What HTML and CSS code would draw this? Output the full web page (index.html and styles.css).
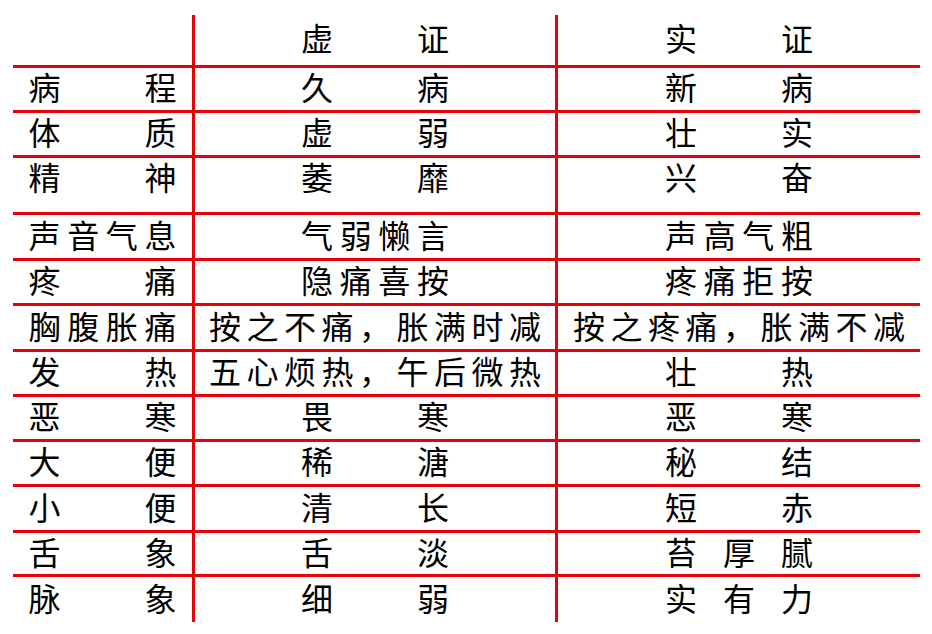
FILE: index.html
```html
<!DOCTYPE html>
<html lang="zh-CN">
<head>
<meta charset="utf-8">
<title>虚证与实证</title>
<link rel="stylesheet" href="styles.css">
</head>
<body>
<div class="table">
  <div class="row head">
    <div class="c c1"></div>
    <div class="c c2"><span class="j">虚证</span></div>
    <div class="c c3"><span class="j">实证</span></div>
  </div>
  <div class="row h45">
    <div class="c c1"><span class="j">病程</span></div>
    <div class="c c2"><span class="j">久病</span></div>
    <div class="c c3"><span class="j">新病</span></div>
  </div>
  <div class="row h45">
    <div class="c c1"><span class="j">体质</span></div>
    <div class="c c2"><span class="j">虚弱</span></div>
    <div class="c c3"><span class="j">壮实</span></div>
  </div>
  <div class="row tall">
    <div class="c c1"><span class="j">精神</span></div>
    <div class="c c2"><span class="j">萎靡</span></div>
    <div class="c c3"><span class="j">兴奋</span></div>
  </div>
  <div class="row h46">
    <div class="c c1"><span class="j">声音气息</span></div>
    <div class="c c2"><span class="j">气弱懒言</span></div>
    <div class="c c3"><span class="j">声高气粗</span></div>
  </div>
  <div class="row h45">
    <div class="c c1"><span class="j">疼痛</span></div>
    <div class="c c2"><span class="j">隐痛喜按</span></div>
    <div class="c c3"><span class="j">疼痛拒按</span></div>
  </div>
  <div class="row h46">
    <div class="c c1"><span class="j">胸腹胀痛</span></div>
    <div class="c c2"><span class="s">按之不痛，胀满时减</span></div>
    <div class="c c3"><span class="s">按之疼痛，胀满不减</span></div>
  </div>
  <div class="row h45">
    <div class="c c1"><span class="j">发热</span></div>
    <div class="c c2"><span class="s">五心烦热，午后微热</span></div>
    <div class="c c3"><span class="j">壮热</span></div>
  </div>
  <div class="row h45">
    <div class="c c1"><span class="j">恶寒</span></div>
    <div class="c c2"><span class="j">畏寒</span></div>
    <div class="c c3"><span class="j">恶寒</span></div>
  </div>
  <div class="row h45">
    <div class="c c1"><span class="j">大便</span></div>
    <div class="c c2"><span class="j">稀溏</span></div>
    <div class="c c3"><span class="j">秘结</span></div>
  </div>
  <div class="row h46">
    <div class="c c1"><span class="j">小便</span></div>
    <div class="c c2"><span class="j">清长</span></div>
    <div class="c c3"><span class="j">短赤</span></div>
  </div>
  <div class="row h44">
    <div class="c c1"><span class="j">舌象</span></div>
    <div class="c c2"><span class="j">舌淡</span></div>
    <div class="c c3"><span class="j">苔厚腻</span></div>
  </div>
  <div class="row last">
    <div class="c c1"><span class="j">脉象</span></div>
    <div class="c c2"><span class="j">细弱</span></div>
    <div class="c c3"><span class="j">实有力</span></div>
  </div>
</div>
</body>
</html>
```

FILE: styles.css
```css
html, body {
  margin: 0;
  padding: 0;
  background: #ffffff;
}

body {
  font-family: "Noto Sans CJK SC", "Noto Sans CJK TC", sans-serif;
  color: #000000;
}

.table {
  padding: 15px 0 0 13px;
  width: 907px;
  display: flex;
  flex-direction: column;
}

.row {
  display: flex;
  box-sizing: border-box;
  border-top: 3px solid #e8000b;
  width: 907px;
}

.row.head {
  border-top: none;
  height: 50px;
}

.h44 { height: 44px; }
.h45 { height: 45px; }
.h46 { height: 46px; }
.tall { height: 57px; }
.last { height: 48px; }

.c {
  box-sizing: border-box;
  display: flex;
  align-items: center;
  justify-content: center;
  font-size: 32px;
  line-height: 40px;
  padding-bottom: 6px;
}

.tall .c {
  padding-bottom: 18px;
}

.c1 { width: 179px; }

.c2 {
  width: 363px;
  border-left: 3px solid #e8000b;
}

.c3 {
  width: 365px;
  border-left: 3px solid #e8000b;
}

.j {
  display: inline-block;
  width: 148px;
  text-align: justify;
  text-align-last: justify;
  white-space: nowrap;
}

.s {
  display: inline-block;
  letter-spacing: 5.5px;
  margin-right: -5.5px;
  white-space: nowrap;
}
```
